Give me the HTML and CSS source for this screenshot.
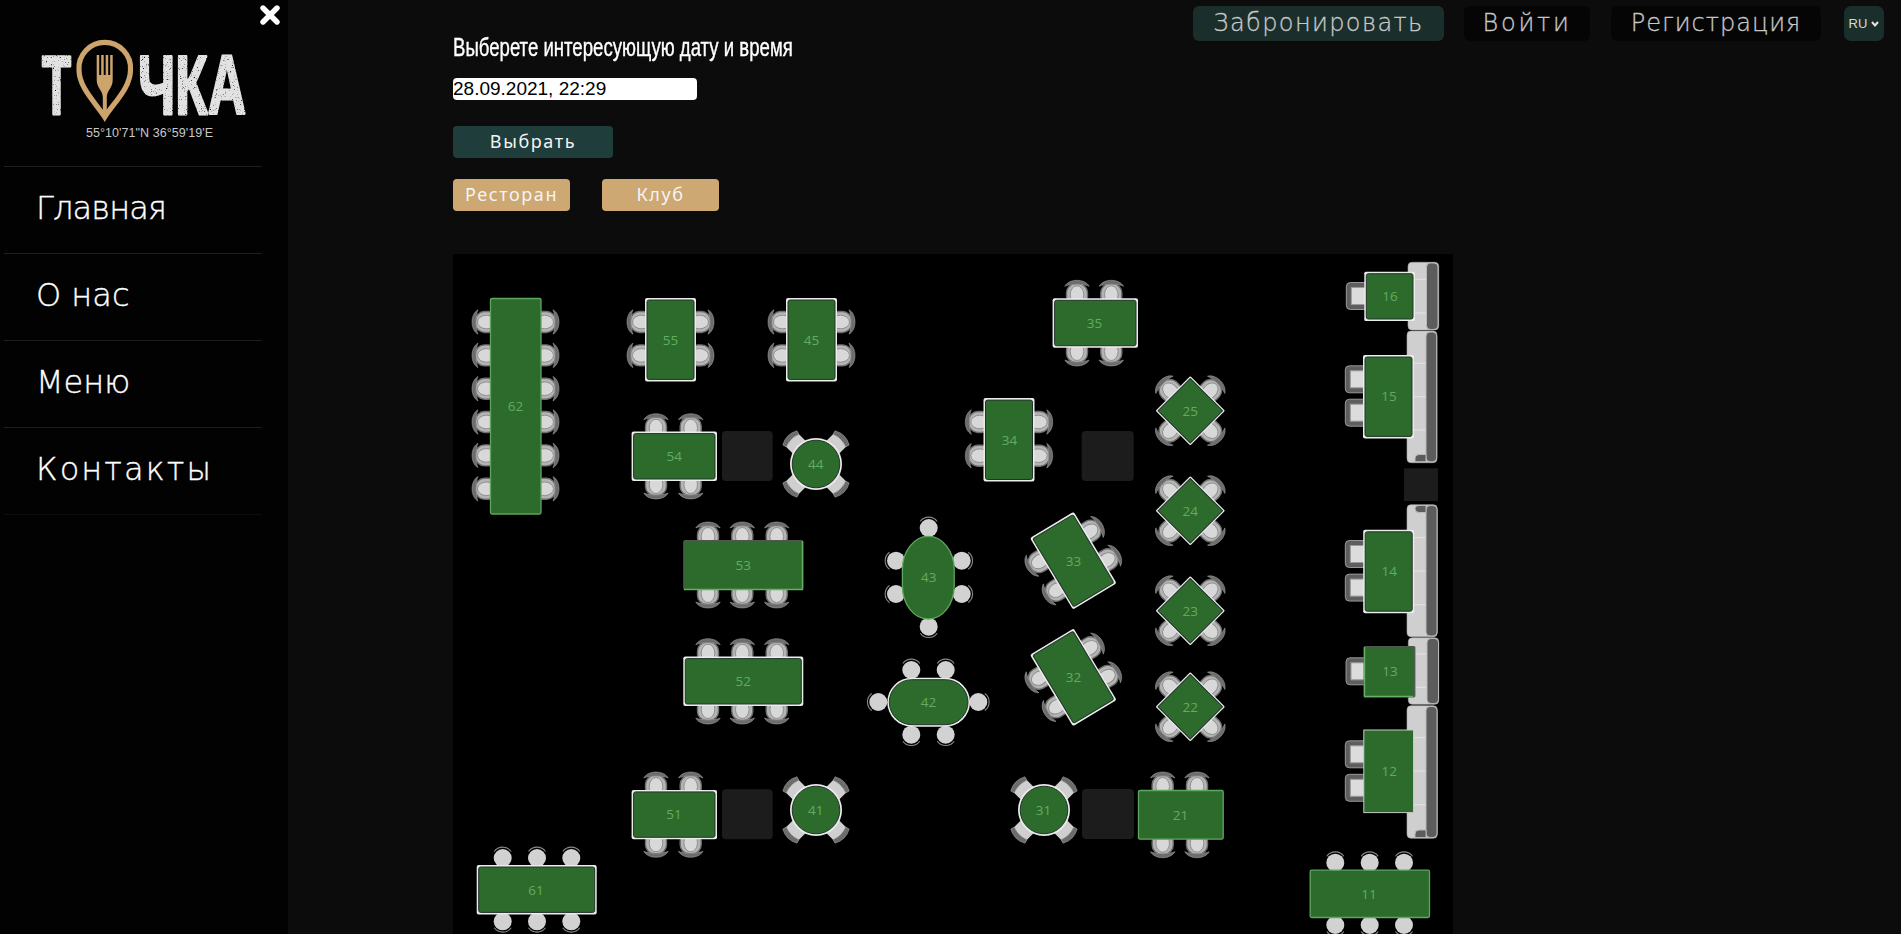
FILE: index.html
```
<!DOCTYPE html>
<html lang="ru">
<head>
<meta charset="utf-8">
<title>Точка</title>
<link rel="stylesheet" href="styles.css">
</head>
<body>
<aside class="sidebar">
  <svg class="close" viewBox="0 0 20 20" width="20" height="20"><path class="close-x" d="M3 3 17 17M17 3 3 17"/></svg>
  <svg class="logo" viewBox="0 0 288 166" width="288" height="166">
    <defs>
      <filter id="grain" x="-5%" y="-5%" width="110%" height="110%">
        <feTurbulence type="fractalNoise" baseFrequency="0.9" numOctaves="2" seed="4" result="n"/>
        <feColorMatrix in="n" type="matrix" values="0 0 0 0 0  0 0 0 0 0  0 0 0 0 0  0 0 0 -4 3.5" result="m"/>
        <feComposite in="SourceGraphic" in2="m" operator="in"/>
      </filter>
    </defs>
    <text class="logo-word" transform="translate(42,114) scale(0.57,1)" textLength="50.9" lengthAdjust="spacingAndGlyphs">Т</text>
    <text class="logo-word" transform="translate(138,114) scale(0.635,1)" textLength="170" lengthAdjust="spacingAndGlyphs">ЧКА</text>
    <path class="pin" d="M104.7 117C96 103 79 88 79 69.7A25.8 25.8 0 1 1 130.5 69.7C130.5 88 113.5 103 104.7 117Z"/>
    <path class="fork" d="M96.7 55h2.5v20h2V55h2.5v20h2V55h2.5v20h2V55h2.5V80C112.7 88 107 90 106.8 97V111L110 108 104.7 116 99.5 108 102.8 111V97C102.5 90 96.7 88 96.7 80Z"/>
    <text class="logo-coords" x="86" y="137" textLength="127" lengthAdjust="spacing">55°10'71"N 36°59'19'E</text>
  </svg>
  <nav class="nav">
    <a class="nav-item nav-home">Главная</a>
    <a class="nav-item">О нас</a>
    <a class="nav-item">Меню</a>
    <a class="nav-item nav-contacts">Контакты</a>
  </nav>
</aside>
<main class="main">
  <div class="top-row">
    <form class="picker">
      <h1 class="picker-title">Выберете интересующую дату и время</h1>
      <div class="date-input">28.09.2021, 22:29</div>
      <div class="btn btn-pick">Выбрать</div>
      <div class="halls">
        <div class="btn btn-hall">Ресторан</div>
        <div class="btn btn-hall">Клуб</div>
      </div>
    </form>
    <header class="topbar">
      <a class="top-btn top-book">Забронировать</a>
      <a class="top-btn top-login">Войти</a>
      <a class="top-btn top-reg">Регистрация</a>
      <div class="lang">RU<svg viewBox="0 0 8 6" width="8" height="6"><path class="lang-chev" d="M1 1 4 4.4 7 1"/></svg></div>
    </header>
  </div>
  <svg class="plan" viewBox="453 254 1000 680" width="1000" height="680">
    <defs>
      <g id="ch">
        <rect class="c-body" x="-10.5" y="-14.5" width="21" height="22" rx="9"/>
        <ellipse class="c-inner" cx="0" cy="-3.5" rx="6.8" ry="9"/>
        <path class="c-back" d="M-12.2-12C-8-20 8-20 12.2-12 7-14.6-7-14.6-12.2-12Z"/>
      </g>
      <g id="cr">
        <path class="c-arc" d="M-8.5-13.5A10.5 10.5 0 0 1 8.5-13.5"/>
        <circle class="c-round" cx="0" cy="-7" r="9"/>
      </g>
      <g id="cd">
        <rect class="c-seat" x="-9" y="-11" width="18" height="16"/>
        <path class="c-back" d="M-10-11Q0-16.5 10-11L9-7Q0-10.5-9-7Z"/>
      </g>
      <g id="cs">
        <rect class="c-sq" x="-13.5" y="-18" width="27" height="24" rx="4"/>
        <rect class="c-sqin" x="-8.5" y="-13" width="17" height="19"/>
      </g>
      <g id="t-wide"><rect class="t-w" x="-42.7" y="-24.7" width="85.4" height="49.4" rx="2"/><rect class="t-i" x="-40.7" y="-22.7" width="81.4" height="45.4" rx="2"/></g>
      <g id="t-tall"><rect class="t-w" x="-25.5" y="-41.7" width="51" height="83.4" rx="2"/><rect class="t-i" x="-23.5" y="-39.7" width="47" height="79.4" rx="2"/></g>
      <g id="t-long"><rect class="t-w" x="-60" y="-24.7" width="120" height="49.4" rx="2"/><rect class="t-i" x="-58" y="-22.7" width="116" height="45.4" rx="2"/></g>
      <g id="t-dia"><rect class="t-w" x="-24.5" y="-24.5" width="49" height="49" rx="1"/><rect class="t-i" x="-22.8" y="-22.8" width="45.6" height="45.6"/></g>
      <g id="t-round"><circle class="t-w" r="26"/><circle class="t-i" r="23.8"/></g>
      <g id="seat-round">
        <use href="#cd" transform="rotate(-45) translate(0,-26)"/>
        <use href="#cd" transform="rotate(45) translate(0,-26)"/>
        <use href="#cd" transform="rotate(135) translate(0,-26)"/>
        <use href="#cd" transform="rotate(-135) translate(0,-26)"/>
      </g>
      <g id="dia">
        <use href="#ch" transform="translate(0,-24.5)"/>
        <use href="#ch" transform="translate(24.5,0) rotate(90)"/>
        <use href="#ch" transform="translate(0,24.5) rotate(180)"/>
        <use href="#ch" transform="translate(-24.5,0) rotate(-90)"/>
        <use href="#t-dia"/>
      </g>
      <g id="rot">
        <use href="#ch" transform="translate(-25.5,-16.7) rotate(-90)"/>
        <use href="#ch" transform="translate(-25.5,16.7) rotate(-90)"/>
        <use href="#ch" transform="translate(25.5,-16.7) rotate(90)"/>
        <use href="#ch" transform="translate(25.5,16.7) rotate(90)"/>
        <use href="#t-tall"/>
      </g>
    </defs>

    <!-- dark blocks -->
    <rect class="block" x="722" y="431" width="50.7" height="50" rx="4"/>
    <rect class="block" x="722" y="789.3" width="50.7" height="50" rx="4"/>
    <rect class="block" x="1081.7" y="431" width="52" height="50" rx="4"/>
    <rect class="block" x="1082" y="789" width="52" height="50" rx="4"/>
    <rect class="block" x="1404" y="468.3" width="34" height="32.7"/>

    <!-- 62 -->
    <use href="#ch" transform="translate(490,322) rotate(-90)"/><use href="#ch" transform="translate(490,355.4) rotate(-90)"/><use href="#ch" transform="translate(490,388.7) rotate(-90)"/><use href="#ch" transform="translate(490,422) rotate(-90)"/><use href="#ch" transform="translate(490,455.4) rotate(-90)"/><use href="#ch" transform="translate(490,488.8) rotate(-90)"/>
    <use href="#ch" transform="translate(541,322) rotate(90)"/><use href="#ch" transform="translate(541,355.4) rotate(90)"/><use href="#ch" transform="translate(541,388.7) rotate(90)"/><use href="#ch" transform="translate(541,422) rotate(90)"/><use href="#ch" transform="translate(541,455.4) rotate(90)"/><use href="#ch" transform="translate(541,488.8) rotate(90)"/>
    <rect class="t-g" x="490.5" y="298.5" width="50.5" height="215.5" rx="1.5"/>

    <!-- 55, 45 -->
    <use href="#ch" transform="translate(645,322) rotate(-90)"/><use href="#ch" transform="translate(645,355.4) rotate(-90)"/><use href="#ch" transform="translate(696,322) rotate(90)"/><use href="#ch" transform="translate(696,355.4) rotate(90)"/>
    <use href="#t-tall" transform="translate(670.5,339.7)"/>
    <use href="#ch" transform="translate(786,322) rotate(-90)"/><use href="#ch" transform="translate(786,355.4) rotate(-90)"/><use href="#ch" transform="translate(837,322) rotate(90)"/><use href="#ch" transform="translate(837,355.4) rotate(90)"/>
    <use href="#t-tall" transform="translate(811.5,339.7)"/>

    <!-- 54 -->
    <use href="#ch" transform="translate(656,431.7)"/><use href="#ch" transform="translate(690.7,431.7)"/><use href="#ch" transform="translate(656,481) rotate(180)"/><use href="#ch" transform="translate(690.7,481) rotate(180)"/>
    <use href="#t-wide" transform="translate(674.3,456.3)"/>

    <!-- 44, 41, 31 -->
    <use href="#seat-round" transform="translate(816,464)"/><use href="#t-round" transform="translate(816,464)"/>
    <use href="#seat-round" transform="translate(816,810)"/><use href="#t-round" transform="translate(816,810)"/>
    <use href="#seat-round" transform="translate(1044,810)"/><use href="#t-round" transform="translate(1044,810)"/>

    <!-- 53, 52 -->
    <use href="#ch" transform="translate(708,540)"/><use href="#ch" transform="translate(742.3,540)"/><use href="#ch" transform="translate(776.7,540)"/>
    <use href="#ch" transform="translate(708,590) rotate(180)"/><use href="#ch" transform="translate(742.3,590) rotate(180)"/><use href="#ch" transform="translate(776.7,590) rotate(180)"/>
    <rect class="t-m" x="683.8" y="540.5" width="119" height="49" rx="1.5"/>
    <path class="t-hi" d="M802.5 541V589.5H684"/>
    <use href="#ch" transform="translate(708,656.7)"/><use href="#ch" transform="translate(742.3,656.7)"/><use href="#ch" transform="translate(776.7,656.7)"/>
    <use href="#ch" transform="translate(708,706) rotate(180)"/><use href="#ch" transform="translate(742.3,706) rotate(180)"/><use href="#ch" transform="translate(776.7,706) rotate(180)"/>
    <use href="#t-long" transform="translate(743.3,681.3)"/>

    <!-- 35, 34 -->
    <use href="#ch" transform="translate(1077,298.3)"/><use href="#ch" transform="translate(1111.3,298.3)"/><use href="#ch" transform="translate(1077,348) rotate(180)"/><use href="#ch" transform="translate(1111.3,348) rotate(180)"/>
    <use href="#t-wide" transform="translate(1095.3,323)"/>
    <use href="#ch" transform="translate(983.3,422) rotate(-90)"/><use href="#ch" transform="translate(983.3,455.7) rotate(-90)"/><use href="#ch" transform="translate(1034.7,422) rotate(90)"/><use href="#ch" transform="translate(1034.7,455.7) rotate(90)"/>
    <use href="#t-tall" transform="translate(1009,439.8)"/>

    <!-- 43 -->
    <use href="#cr" transform="translate(928.7,535)"/><use href="#cr" transform="translate(928.7,619.7) rotate(180)"/>
    <use href="#cr" transform="translate(903,560.7) rotate(-90)"/><use href="#cr" transform="translate(903,594) rotate(-90)"/>
    <use href="#cr" transform="translate(954.7,560.7) rotate(90)"/><use href="#cr" transform="translate(954.7,594) rotate(90)"/>
    <rect class="t-g" x="902.4" y="536.4" width="51.8" height="82.6" rx="25.9" ry="33"/>

    <!-- 42 -->
    <use href="#cr" transform="translate(911.3,677)"/><use href="#cr" transform="translate(945.7,677)"/>
    <use href="#cr" transform="translate(911.3,727.7) rotate(180)"/><use href="#cr" transform="translate(945.7,727.7) rotate(180)"/>
    <use href="#cr" transform="translate(885.3,702) rotate(-90)"/><use href="#cr" transform="translate(971.3,702) rotate(90)"/>
    <rect class="t-w" x="887.3" y="677.7" width="82.7" height="49" rx="24.5"/>
    <rect class="t-i" x="889.3" y="679.7" width="78.7" height="45" rx="22.5"/>

    <!-- 33, 32 -->
    <use href="#rot" transform="translate(1073.3,560.7) rotate(-31)"/>
    <use href="#rot" transform="translate(1073.3,677.3) rotate(-31)"/>

    <!-- diamonds -->
    <use href="#dia" transform="translate(1190.3,410.7) rotate(45)"/>
    <use href="#dia" transform="translate(1190.3,510.7) rotate(45)"/>
    <use href="#dia" transform="translate(1190.3,610.7) rotate(45)"/>
    <use href="#dia" transform="translate(1190.3,706.7) rotate(45)"/>

    <!-- 51 -->
    <use href="#ch" transform="translate(656,790)"/><use href="#ch" transform="translate(690.7,790)"/><use href="#ch" transform="translate(656,839.3) rotate(180)"/><use href="#ch" transform="translate(690.7,839.3) rotate(180)"/>
    <use href="#t-wide" transform="translate(674.3,814.6)"/>

    <!-- 21 -->
    <use href="#ch" transform="translate(1162.7,790)"/><use href="#ch" transform="translate(1197,790)"/><use href="#ch" transform="translate(1162.7,839.7) rotate(180)"/><use href="#ch" transform="translate(1197,839.7) rotate(180)"/>
    <rect class="t-g" x="1138.5" y="790.5" width="84.7" height="48.7" rx="1.5"/>

    <!-- 61 -->
    <use href="#cr" transform="translate(502.7,865)"/><use href="#cr" transform="translate(537,865)"/><use href="#cr" transform="translate(571.3,865)"/>
    <use href="#cr" transform="translate(502.7,914.3) rotate(180)"/><use href="#cr" transform="translate(537,914.3) rotate(180)"/><use href="#cr" transform="translate(571.3,914.3) rotate(180)"/>
    <use href="#t-long" transform="translate(536.7,889.7)"/>

    <!-- 11 -->
    <use href="#cr" transform="translate(1335.3,869.7)"/><use href="#cr" transform="translate(1369.7,869.7)"/><use href="#cr" transform="translate(1404,869.7)"/>
    <use href="#cr" transform="translate(1335.3,918) rotate(180)"/><use href="#cr" transform="translate(1369.7,918) rotate(180)"/><use href="#cr" transform="translate(1404,918) rotate(180)"/>
    <rect class="t-g" x="1310.2" y="870.2" width="119.3" height="47.3" rx="1.5"/>

    <!-- sofas -->
    <rect class="s-body" x="1408" y="262.3" width="30.7" height="67.7" rx="4"/>
    <path class="s-seam" d="M1408 279.3H1426M1408 313H1426"/>
    <rect class="s-back" x="1426.5" y="263" width="11.5" height="66.5" rx="4"/>

    <rect class="s-body" x="1407" y="331" width="30" height="131.7" rx="4"/>
    <path class="s-seam" d="M1407 363.3H1426M1407 396.7H1426M1407 430H1426"/>
    <rect class="s-back" x="1426" y="332" width="10.7" height="129.7" rx="4"/>
    <path class="s-arm" d="M1415 458.5Q1415 454.5 1419 454.5H1426V461.7H1415Z"/>

    <rect class="s-body" x="1407" y="504.7" width="30.3" height="132" rx="4"/>
    <path class="s-seam" d="M1407 537.7H1426M1407 571H1426M1407 604.7H1426"/>
    <rect class="s-back" x="1426" y="505.5" width="11" height="130.5" rx="4"/>
    <path class="s-arm" d="M1415 508.5Q1415 505.5 1419 505.5H1426V512.5H1419Q1415 512.5 1415 508.5Z"/>

    <rect class="s-body" x="1408.3" y="637.7" width="30.4" height="66.6" rx="4"/>
    <path class="s-seam" d="M1408 654H1427M1408 687.3H1427"/>
    <rect class="s-back" x="1427" y="638.5" width="11.5" height="65" rx="4"/>

    <rect class="s-body" x="1407" y="705.7" width="30.3" height="132.6" rx="4"/>
    <path class="s-seam" d="M1407 737.7H1426M1407 771H1426M1407 804.7H1426"/>
    <rect class="s-back" x="1426" y="706.5" width="11" height="131" rx="4"/>
    <path class="s-arm" d="M1415 834Q1415 830 1419 830H1426V837.5H1415Z"/>

    <!-- booth tables -->
    <use href="#cs" transform="translate(1364.3,296) rotate(-90)"/>
    <rect class="t-w" x="1364.3" y="271.7" width="50.7" height="49.3" rx="1.5"/><rect class="t-i" x="1366.3" y="273.7" width="46.7" height="45.3" rx="2"/>
    <use href="#cs" transform="translate(1363.3,379.3) rotate(-90)"/><use href="#cs" transform="translate(1363.3,412.7) rotate(-90)"/>
    <use href="#t-tall" transform="translate(1388.5,396.7)"/>
    <use href="#cs" transform="translate(1363.3,554) rotate(-90)"/><use href="#cs" transform="translate(1363.3,587.6) rotate(-90)"/>
    <use href="#t-tall" transform="translate(1388.7,571.5)"/>
    <use href="#cs" transform="translate(1364,671.3) rotate(-90)"/>
    <rect class="t-m" x="1364.2" y="646.5" width="50.6" height="50.3" rx="1"/>
    <path class="t-hi" d="M1364.5 647V696.5H1413"/>
    <use href="#cs" transform="translate(1363.3,754.3) rotate(-90)"/><use href="#cs" transform="translate(1363.3,787.8) rotate(-90)"/>
    <rect class="t-12" x="1363.8" y="730" width="49.7" height="82.6"/>

    <!-- labels -->
    <g class="labels">
      <text x="515.5" y="406">62</text><text x="670.5" y="339.5">55</text><text x="811.5" y="339.5">45</text>
      <text x="674.3" y="456">54</text><text x="815.7" y="464">44</text><text x="743.3" y="564.5">53</text>
      <text x="743.3" y="681">52</text><text x="1094.5" y="322.7">35</text><text x="1009.5" y="439.5">34</text>
      <text x="928.7" y="577.3">43</text><text x="928.5" y="702">42</text><text x="1073.5" y="560.5">33</text>
      <text x="1073.5" y="677">32</text><text x="1190.3" y="410.5">25</text><text x="1190.3" y="510.5">24</text>
      <text x="1190.3" y="610.5">23</text><text x="1190.3" y="706.5">22</text><text x="674" y="814.3">51</text>
      <text x="815.7" y="810">41</text><text x="1043.5" y="810">31</text><text x="1180.5" y="814.7">21</text>
      <text x="536" y="889.5">61</text><text x="1369" y="893.7">11</text><text x="1390" y="296">16</text>
      <text x="1389" y="396">15</text><text x="1389.3" y="571">14</text><text x="1390" y="671">13</text><text x="1389.3" y="771">12</text>
    </g>
  </svg>
</main>
</body>
</html>
```
FILE: styles.css
```
html, body {
  margin: 0;
  height: 934px;
  overflow: hidden;
  background: #0c0c0c;
}
body {
  display: flex;
  font-family: "Noto Sans", "Open Sans", sans-serif;
}

/* Sidebar */
.sidebar {
  position: relative;
  flex: 0 0 288px;
  height: 934px;
  background: #020202;
}
.close {
  position: absolute;
  left: 260px;
  top: 5px;
}
.close-x {
  fill: none;
  stroke: #fff;
  stroke-width: 5.4;
  stroke-linecap: round;
}
.logo {
  display: block;
}
.logo-word {
  font-family: "Liberation Sans", sans-serif;
  font-weight: 700;
  font-size: 83px;
  fill: #e2e2e2;
  stroke: #e2e2e2;
  stroke-width: 2.8;
  stroke-linejoin: round;
  filter: url(#grain);
}
.logo-coords {
  font-family: "Liberation Sans", sans-serif;
  font-size: 12.5px;
  fill: #c8c8c8;
}
.pin {
  fill: none;
  stroke: #cda46c;
  stroke-width: 5.2;
  stroke-linejoin: miter;
}
.fork {
  fill: #cda46c;
}
.nav {
  display: flex;
  flex-direction: column;
  width: 258px;
  margin-left: 4px;
  border-top: 1px solid #1e1e1e;
}
.nav-item {
  display: flex;
  align-items: center;
  box-sizing: border-box;
  height: 87px;
  padding: 0 0 4px 32px;
  border-bottom: 1px solid #1e1e1e;
  color: #fff;
  font-family: "DejaVu Sans", sans-serif;
  font-weight: 200;
  font-size: 32px;
  -webkit-text-stroke: 0.35px #fff;
}
.nav-home {
  letter-spacing: -0.85px;
}
.nav-contacts {
  letter-spacing: 2.1px;
}
.nav-item:last-child {
  border-bottom-color: #0e0e0e;
}

/* Main */
.main {
  flex: 1;
  padding-left: 165px;
  min-width: 0;
}
.top-row {
  display: flex;
  justify-content: space-between;
  align-items: flex-start;
  height: 254px;
  width: 1431px;
}
.picker {
  display: flex;
  flex-direction: column;
  align-items: flex-start;
  margin: 0;
  padding-top: 31px;
}
.picker-title {
  margin: 0;
  height: 32px;
  line-height: 32px;
  color: #fff;
  font-family: "Liberation Sans", sans-serif;
  font-weight: 400;
  font-size: 26px;
  white-space: nowrap;
  transform: scaleX(0.715);
  transform-origin: left center;
  -webkit-text-stroke: 0.4px #fff;
}
.date-input {
  width: 244px;
  height: 22px;
  margin-top: 15px;
  line-height: 22px;
  border-radius: 4px;
  background: #fff;
  color: #000;
  font-family: "Liberation Sans", sans-serif;
  font-size: 19px;
}
.btn {
  display: flex;
  align-items: center;
  justify-content: center;
  box-sizing: border-box;
  height: 32px;
  padding-bottom: 3px;
  border-radius: 4px;
  color: #f4f4f4;
  font-size: 18px;
  letter-spacing: 1.6px;
}
.btn-pick {
  width: 160px;
  margin-top: 26px;
  background: #1f3d3a;
}
.halls {
  display: flex;
  gap: 32px;
  margin-top: 21px;
}
.btn-hall {
  width: 117px;
  background: #cda873;
}
.topbar {
  display: flex;
  padding-top: 6px;
}
.top-btn {
  display: flex;
  align-items: center;
  justify-content: center;
  box-sizing: border-box;
  height: 35px;
  padding-bottom: 2px;
  border-radius: 6px;
  color: #c8c8c8;
  font-family: "DejaVu Sans", sans-serif;
  font-weight: 200;
  font-size: 24px;
  -webkit-text-stroke: 0.3px #c8c8c8;
}
.top-book {
  width: 251px;
  background: #1a2f2c;
  letter-spacing: 1.4px;
}
.top-login {
  width: 126px;
  margin-left: 20px;
  background: #050505;
  letter-spacing: 2.8px;
}
.top-reg {
  width: 210px;
  margin-left: 21px;
  background: #050505;
  letter-spacing: 1px;
}
.lang {
  display: flex;
  align-items: center;
  justify-content: center;
  gap: 4px;
  width: 40px;
  height: 35px;
  margin-left: 23px;
  border-radius: 7px;
  background: #1a2f2c;
  color: #d8d8d8;
  font-family: "Liberation Sans", sans-serif;
  font-size: 13px;
}
.lang-chev {
  fill: none;
  stroke: #e6e6e6;
  stroke-width: 2;
}

/* Floor plan */
.plan {
  display: block;
  background: #000;
}
.block {
  fill: #1c1c1c;
}
.t-w {
  fill: #ececec;
}
.t-i {
  fill: #2c6b2c;
  stroke: #22342a;
  stroke-width: 1;
}
.t-g {
  fill: #2c6b2c;
  stroke: #5ea75e;
  stroke-width: 1.3;
}
.t-m {
  fill: #2c6b2c;
  stroke: #555;
  stroke-width: 1.2;
}
.t-hi {
  fill: none;
  stroke: #66b066;
  stroke-width: 1.4;
}
.t-12 {
  fill: #2c6b2c;
  stroke: #c8c8c8;
  stroke-width: 1;
}
.c-body {
  fill: #b4b4b4;
  stroke: #6e6e6e;
  stroke-width: 1.4;
}
.c-inner {
  fill: #d8d8d8;
  stroke: #8a8a8a;
  stroke-width: 0.9;
}
.c-back {
  fill: #6c6c6c;
  stroke: #a8a8a8;
  stroke-width: 0.5;
}
.c-round {
  fill: #d2d2d2;
}
.c-arc {
  fill: none;
  stroke: #8a8a8a;
  stroke-width: 1.1;
}
.c-seat {
  fill: #cfcfcf;
}
.c-sq {
  fill: #5e5e5e;
  stroke: #b0b0b0;
  stroke-width: 0.8;
}
.c-sqin {
  fill: #dcdcdc;
  stroke: #999;
  stroke-width: 1;
}
.s-body {
  fill: #cfcfcf;
  stroke: #a8a8a8;
  stroke-width: 0.6;
}
.s-back, .s-arm {
  fill: #5c5c5c;
  stroke: #b8b8b8;
  stroke-width: 1;
}
.s-seam {
  fill: none;
  stroke: #e4e4e4;
  stroke-width: 1;
}
.labels text {
  fill: #62ab62;
  font-family: "Open Sans", "Noto Sans", sans-serif;
  font-size: 13.5px;
  text-anchor: middle;
  dominant-baseline: central;
}
```
